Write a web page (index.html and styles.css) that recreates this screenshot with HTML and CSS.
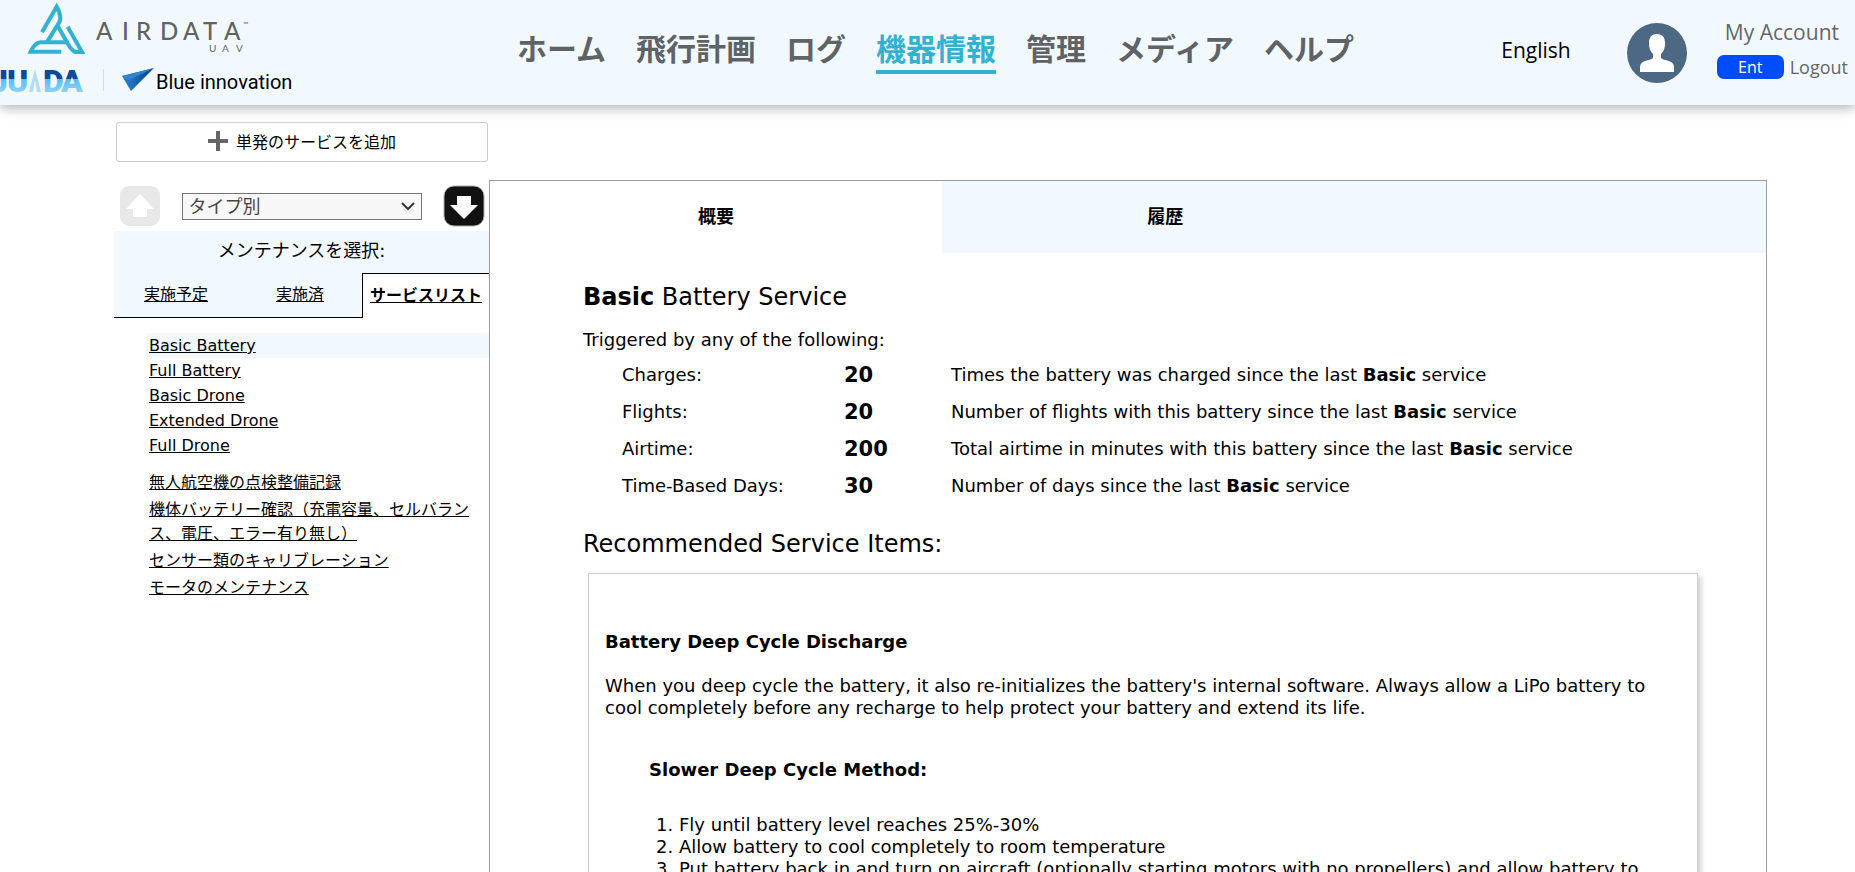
FILE: index.html
```html
<!DOCTYPE html>
<html lang="ja">

<head>
  <meta charset="UTF-8" />
  <title>AirData UAV | 機器情報</title>
  <link rel="stylesheet" href="styles.css">
</head>

<body>

  <header class="top-bar">
    <a href="#" class="brand" aria-label="AirData UAV">
      <svg width="320" height="105" viewBox="0 0 320 105">
        <defs>
          <linearGradient id="juidaFill" gradientUnits="userSpaceOnUse" x1="0" y1="68" x2="0" y2="92">
            <stop offset="0.46" stop-color="#074a9b" />
            <stop offset="0.46" stop-color="#5cbcf0" />
            <stop offset="1" stop-color="#8ad2f7" />
          </linearGradient>
          <linearGradient id="planeFill" x1="0" y1="0" x2="1" y2="0">
            <stop offset="0" stop-color="#2b84cf" />
            <stop offset="1" stop-color="#063f85" />
          </linearGradient>
        </defs>
        <!-- triangle mark -->
        <g transform="scale(0.3333)" fill="none" stroke="#33b1d3" stroke-width="12">
          <path d="M126 97 L170 20 Q181 38 181 58 Q180 66 172 76 L140 128" />
          <path d="M172 76 L204 132 Q214 150 226 156 H246 L203 80" />
          <path d="M206 127 H122 Q104 128 92 155 H184" />
        </g>
        <text class="brand-name" x="96 122 136 160 183 203 224" y="40">AIRDATA</text>
        <text class="brand-tm" x="243" y="27">™</text>
        <text class="brand-sub" x="209 222 236" y="52">UAV</text>
        <!-- partner logos -->
        <text class="brand-juida" x="-10 7" y="92">JU</text>
        <text class="brand-juida" x="43 61" y="92">DA</text>
        <path d="M29 92 L35 69 L41 92 H37 L35 80 L33 92Z" fill="#b5dcf5" />
        <path d="M103 69 H104 V91 H103Z" fill="#cfdbe6" />
        <path d="M122 76 L154 68 L131 91Z" fill="url(#planeFill)" />
        <path d="M122 76 L154 68 L129 80Z" fill="#2e86d0" />
        <text class="brand-partner" x="156" y="89">Blue innovation</text>
      </svg>
    </a>

    <nav class="main-nav">
      <a href="#">ホーム</a>
      <a href="#">飛行計画</a>
      <a href="#">ログ</a>
      <a href="#" class="active">機器情報</a>
      <a href="#">管理</a>
      <a href="#">メディア</a>
      <a href="#">ヘルプ</a>
    </nav>

    <div class="account-area">
      <a href="#" class="lang-link">English</a>
      <svg class="avatar" width="60" height="60" viewBox="0 0 60 60">
        <circle cx="30" cy="30" r="30" fill="#4d6882" />
        <path d="M30 11 C36 11 38 15 38 20 C38 25 37 28 34 31 V35 C37 38 47 37 47 44 V49 H13 V44 C13 37 23 38 26 35 V31 C23 28 22 25 22 20 C22 15 24 11 30 11Z" fill="#fff" />
      </svg>
      <div class="account-links">
        <a href="#" class="account-name">My Account</a>
        <div class="account-row">
          <span class="plan-badge">Ent</span>
          <a href="#">Logout</a>
        </div>
      </div>
    </div>
  </header>

  <main class="page">

    <aside class="sidebar">
      <button type="button" class="add-service">
        <svg width="20" height="20" viewBox="0 0 20 20">
          <path d="M10 0V20M0 10H20" stroke="#666" stroke-width="4" />
        </svg>
        単発のサービスを追加
      </button>

      <div class="type-picker">
        <button type="button" class="arrow-btn" aria-label="前へ" disabled>
          <svg width="40" height="40" viewBox="0 0 40 40">
            <rect width="40" height="40" rx="9" fill="#e8e8e8" />
            <path d="M20 8 L34 23 H27 V31 H13 V23 H6Z" fill="#fff" />
          </svg>
        </button>
        <div class="type-field">
          <select class="type-select" aria-label="表示">
            <option>タイプ別</option>
          </select>
          <svg class="chevron" width="14" height="9" viewBox="0 0 14 9">
            <path d="M1 1 L7 7 L13 1" fill="none" stroke="#333" stroke-width="2" />
          </svg>
        </div>
        <button type="button" class="arrow-btn" aria-label="次へ">
          <svg width="42" height="42" viewBox="0 0 42 42">
            <rect x="1" y="1" width="40" height="40" rx="10" fill="#111" stroke="#aaa" />
            <path d="M21 34 L35 20 H28 V11 H14 V20 H7Z" fill="#fff" />
          </svg>
        </button>
      </div>

      <div class="maintenance-head">
        <p class="maintenance-title">メンテナンスを選択:</p>
        <div class="maintenance-tabs">
          <a href="#">実施予定</a>
          <a href="#">実施済</a>
          <a href="#" class="active">サービスリスト</a>
        </div>
      </div>

      <ul class="service-list">
        <li class="selected"><a href="#">Basic Battery</a></li>
        <li><a href="#">Full Battery</a></li>
        <li><a href="#">Basic Drone</a></li>
        <li><a href="#">Extended Drone</a></li>
        <li><a href="#">Full Drone</a></li>
      </ul>
      <ul class="service-list custom">
        <li><a href="#">無人航空機の点検整備記録</a></li>
        <li><a href="#">機体バッテリー確認（充電容量、セルバランス、電圧、エラー有り無し）</a></li>
        <li><a href="#">センサー類のキャリブレーション</a></li>
        <li><a href="#">モータのメンテナンス</a></li>
      </ul>
    </aside>

    <section class="detail">
      <div class="detail-tabs">
        <button type="button" class="active">概要</button>
        <button type="button">履歴</button>
      </div>

      <div class="detail-body">
        <h1><b>Basic</b> Battery Service</h1>
        <p class="trigger-intro">Triggered by any of the following:</p>
        <table class="triggers">
          <tr>
            <td>Charges:</td>
            <td class="amount">20</td>
            <td>Times the battery was charged since the last <b>Basic</b> service</td>
          </tr>
          <tr>
            <td>Flights:</td>
            <td class="amount">20</td>
            <td>Number of flights with this battery since the last <b>Basic</b> service</td>
          </tr>
          <tr>
            <td>Airtime:</td>
            <td class="amount">200</td>
            <td>Total airtime in minutes with this battery since the last <b>Basic</b> service</td>
          </tr>
          <tr>
            <td>Time-Based Days:</td>
            <td class="amount">30</td>
            <td>Number of days since the last <b>Basic</b> service</td>
          </tr>
        </table>

        <h2>Recommended Service Items:</h2>
        <div class="service-card">
          <h3>Battery Deep Cycle Discharge</h3>
          <p>When you deep cycle the battery, it also re-initializes the battery's internal software. Always allow a LiPo battery to cool completely before any recharge to help protect your battery and extend its life.</p>
          <div class="method">
            <h3>Slower Deep Cycle Method:</h3>
            <ol>
              <li>Fly until battery level reaches 25%-30%</li>
              <li>Allow battery to cool completely to room temperature</li>
              <li>Put battery back in and turn on aircraft (optionally starting motors with no propellers) and allow battery to</li>
            </ol>
          </div>
        </div>
      </div>
    </section>

  </main>

</body>

</html>
```
FILE: styles.css
```css
* {
  box-sizing: border-box;
}

body {
  margin: 0;
  background: #fff;
  color: #000;
  font-family: "DejaVu Sans", "Noto Sans CJK JP", sans-serif;
  font-size: 18px;
  line-height: 22px;
}

a {
  color: inherit;
}

button {
  font-family: inherit;
  color: inherit;
  cursor: pointer;
}

/* Header */
.top-bar {
  display: flex;
  justify-content: space-between;
  height: 105px;
  background: #f1f9ff;
  box-shadow: 0 2px 12px rgba(0, 0, 0, 0.35);
  font-family: "Open Sans", "Noto Sans CJK JP", sans-serif;
}

.top-bar a {
  text-decoration: none;
}

.brand {
  width: 517px;
}

.brand svg {
  display: block;
}

.brand-name {
  font-family: Lato, sans-serif;
  font-size: 24px;
  font-weight: 500;
  fill: #5f6366;
}

.brand-tm {
  font-family: Lato, sans-serif;
  font-size: 7px;
  fill: #5f6366;
}

.brand-sub {
  font-family: Lato, sans-serif;
  font-size: 10px;
  fill: #5f6366;
}

.brand-juida {
  font-family: Roboto, sans-serif;
  font-size: 32px;
  font-weight: 900;
  fill: url(#juidaFill);
}

.brand-partner {
  font-family: Roboto, sans-serif;
  font-size: 20px;
}

.main-nav {
  display: flex;
  align-items: flex-start;
  gap: 30px;
  padding-top: 28px;
  font-size: 30px;
  font-weight: bold;
  line-height: 42px;
  color: #5f6366;
  white-space: nowrap;
}

.main-nav .active {
  color: #33b1d3;
  border-bottom: 4px solid #33b1d3;
}

.account-area {
  flex: 1;
  display: flex;
  justify-content: flex-end;
  padding-right: 7px;
}

.lang-link {
  margin: 36px 56px 0 0;
  font-size: 21px;
  line-height: 28px;
}

.avatar {
  margin: 23px 30px 0 0;
}

.account-links {
  padding-top: 18px;
  color: #666;
}

.account-name {
  display: block;
  padding-right: 9px;
  font-size: 21px;
  line-height: 28px;
  text-align: right;
}

.account-row {
  display: flex;
  align-items: center;
  gap: 6px;
  margin-top: 9px;
  font-size: 18px;
  line-height: 24px;
}

.plan-badge {
  width: 67px;
  border-radius: 7px;
  background: #004cff;
  color: #fff;
  font-size: 16px;
  text-align: center;
}

/* Page columns */
.page {
  display: flex;
  padding: 17px 88px 0 114px;
}

.sidebar {
  flex: none;
  width: 375px;
}

.add-service {
  display: flex;
  align-items: center;
  justify-content: center;
  gap: 8px;
  width: 372px;
  height: 40px;
  margin-left: 2px;
  padding-bottom: 4px;
  border: 1px solid #ccc;
  border-radius: 3px;
  background: #fff;
  font-size: 16px;
}

.type-picker {
  display: flex;
  align-items: center;
  justify-content: space-between;
  padding: 23px 4px 4px 6px;
}

.arrow-btn {
  padding: 0;
  border: 0;
  background: none;
}

.arrow-btn svg {
  display: block;
}

.type-field {
  position: relative;
  width: 240px;
}

.type-select {
  display: block;
  width: 100%;
  height: 27px;
  padding: 0 6px;
  border: 1px solid #767676;
  border-radius: 0;
  background: #f7f7f7;
  color: #444;
  font-family: inherit;
  font-size: 18px;
  appearance: none;
}

.chevron {
  position: absolute;
  top: 9px;
  right: 7px;
  pointer-events: none;
}

.maintenance-head {
  background: #f1f9ff;
}

.maintenance-title {
  margin: 0;
  padding: 9px 0 11px;
  text-align: center;
}

.maintenance-tabs {
  display: flex;
  font-size: 16px;
  line-height: 44px;
  text-align: center;
}

.maintenance-tabs a {
  width: 124px;
  border-bottom: 1px solid #000;
}

.maintenance-tabs .active {
  flex: 1;
  border: solid #000;
  border-width: 1px 0 0 1px;
  background: #fff;
  font-weight: bold;
}

.service-list {
  margin: 15px 0 0 33px;
  padding: 0;
  list-style: none;
  font-size: 16px;
  line-height: 25px;
}

.service-list li {
  padding-left: 2px;
}

.service-list .selected {
  background: #f1f9ff;
}

.service-list.custom {
  margin-top: 13px;
  line-height: 24px;
}

.custom li {
  margin-bottom: 3px;
  padding-right: 8px;
}

/* Detail panel */
.detail {
  flex: 1;
  margin-top: 58px;
  border: 1px solid #9a9fa3;
}

.detail-tabs {
  display: flex;
  background: #f1f9ff;
}

.detail-tabs button {
  width: 35%;
  height: 72px;
  padding: 0 0 4px;
  border: 0;
  background: none;
  font-size: 18px;
  font-weight: bold;
}

.detail-tabs .active {
  width: 452px;
  background: #fff;
}

.detail-body {
  padding: 30px 68px 40px 93px;
}

h1,
h2 {
  margin: 0;
  font-size: 24px;
  font-weight: normal;
  line-height: 28px;
}

h3 {
  margin: 0;
  font-size: 18px;
}

.trigger-intro {
  margin: 18px 0 5px;
}

.triggers {
  margin-left: 39px;
  border-collapse: collapse;
}

.triggers td {
  height: 37px;
  padding: 0;
}

.triggers td:first-child {
  width: 222px;
}

.triggers .amount {
  width: 107px;
  font-size: 21px;
  font-weight: bold;
}

h2 {
  margin-top: 26px;
}

.service-card {
  margin: 15px 0 0 5px;
  padding: 57px 40px 40px 16px;
  border: 1px solid #ccc;
  box-shadow: 3px 3px 6px rgba(0, 0, 0, 0.2);
}

.service-card p {
  margin: 22px 0 40px;
}

.method {
  padding-left: 44px;
}

.method ol {
  margin: 33px 0 0;
  padding-left: 30px;
}
```
